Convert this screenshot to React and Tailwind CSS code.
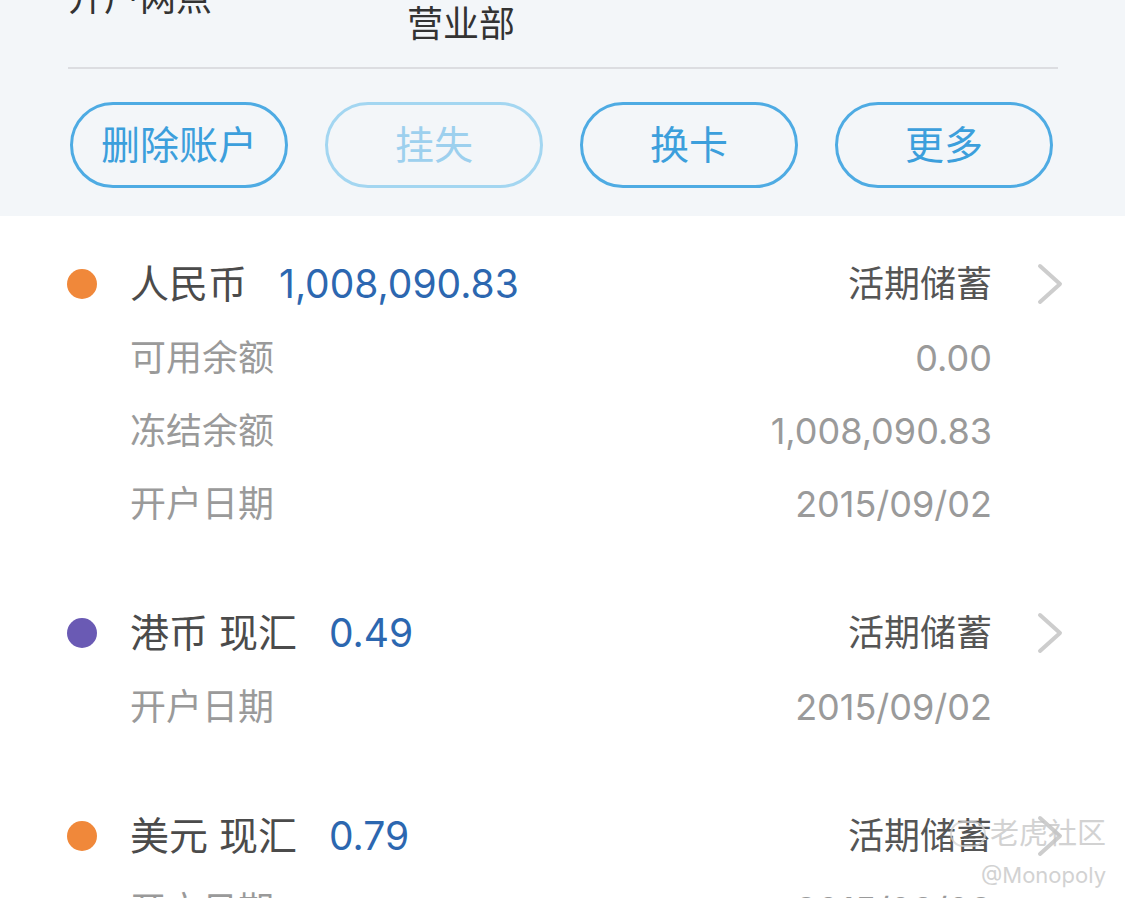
const accounts = [
  {
    name: '人民币',
    amount: '1,008,090.83',
    dot: 'bg-[#f0883a]',
    type: '活期储蓄',
    rows: [
      ['可用余额', '0.00'],
      ['冻结余额', '1,008,090.83'],
      ['开户日期', '2015/09/02'],
    ],
  },
  {
    name: '港币 现汇',
    amount: '0.49',
    dot: 'bg-[#6a5ab4]',
    type: '活期储蓄',
    rows: [['开户日期', '2015/09/02']],
  },
  {
    name: '美元 现汇',
    amount: '0.79',
    dot: 'bg-[#f0883a]',
    type: '活期储蓄',
    rows: [['开户日期', '2015/09/02']],
  },
]

const buttons = [
  { label: '删除账户', cls: 'border-[#4eabe3] text-[#3c9fdc]' },
  { label: '挂失', cls: 'border-[#a3d6f1] text-[#9dd0ee]' },
  { label: '换卡', cls: 'border-[#4eabe3] text-[#3c9fdc]' },
  { label: '更多', cls: 'border-[#4eabe3] text-[#3c9fdc]' },
]

function Chevron() {
  return (
    <svg width="28" height="44" viewBox="0 0 28 44" fill="none">
      <polyline points="4,4 24,22 4,40" stroke="#cdcdcd" strokeWidth="4" strokeLinecap="round" strokeLinejoin="round" />
    </svg>
  )
}

function AccountBlock({ acc }) {
  return (
    <div>
      <div className="flex items-center h-[74px]">
        <span className={`w-[30px] h-[30px] rounded-full ml-[67px] shrink-0 ${acc.dot}`} />
        <span className="ml-[33px] text-[39px] text-[#4b4b4b] whitespace-pre">{acc.name}</span>
        <span className="ml-[32px] text-[39px] text-[#2c67b0]">{acc.amount}</span>
        <span className="ml-auto text-[36px] text-[#555]">{acc.type}</span>
        <div className="w-[133px] pl-[44px] flex items-center">
          <Chevron />
        </div>
      </div>
      {acc.rows.map(([label, value]) => (
        <div key={label} className="flex items-center justify-between h-[73px] pl-[130px] pr-[133px] text-[36px] text-[#9a9a9a]">
          <span>{label}</span>
          <span>{value}</span>
        </div>
      ))}
    </div>
  )
}

export default function App() {
  return (
    <div
      className="relative w-[1125px] h-[898px] overflow-hidden bg-white"
      style={{ fontFamily: 'Inter, "Noto Sans CJK SC", sans-serif' }}
    >
      {/* account summary header */}
      <div className="bg-[#f3f6f9] overflow-hidden pb-[28px]">
        <div className="flex -mt-[26px] px-[68px] text-[36px] text-[#333]">
          <span className="w-[339px] leading-[48px]">开户网点</span>
          <span className="pt-[26px] leading-[48px]">营业部</span>
        </div>
        <div className="mt-[19px] ml-[68px] mr-[67px] h-[2px] bg-[#dcdde1]" />
        <div className="flex gap-[37px] pl-[70px] mt-[33px]">
          {buttons.map((b) => (
            <button
              key={b.label}
              className={`w-[218px] h-[86px] rounded-full border-[3px] bg-transparent text-[39px] flex items-center justify-center ${b.cls}`}
            >
              {b.label}
            </button>
          ))}
        </div>
      </div>

      <div className="pt-[31px] flex flex-col gap-[56px]">
        {accounts.map((acc) => (
          <AccountBlock key={acc.name} acc={acc} />
        ))}
      </div>

      {/* watermark */}
      <div className="absolute left-[950px] top-[814px] flex flex-col items-end text-[#c4c4c4] opacity-75 pointer-events-none">
        <div className="flex items-center">
          <span className="w-[36px] h-[26px] rounded-full border-2 border-[#d4d4d4] mr-[4px]" />
          <span className="text-[29px] leading-[40px]">老虎社区</span>
        </div>
        <span className="text-[22px] leading-[30px] mt-[6px]">@Monopoly</span>
      </div>
    </div>
  )
}
